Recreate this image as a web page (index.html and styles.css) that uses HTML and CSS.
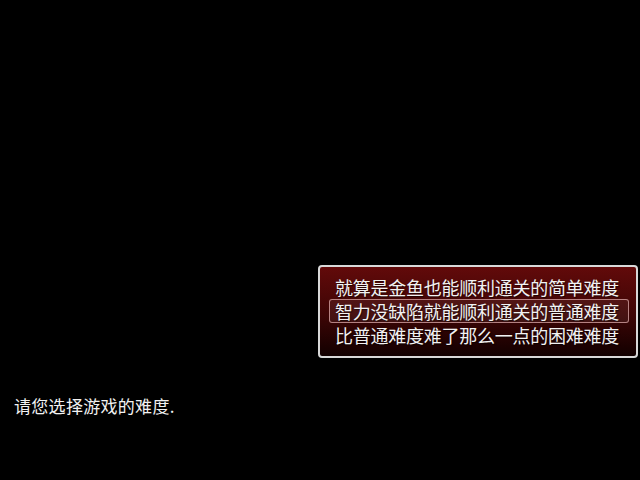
FILE: index.html
```html
<!DOCTYPE html>
<html lang="zh-CN">
<head>
<meta charset="utf-8">
<link rel="stylesheet" href="styles.css">
</head>
<body>
<div class="screen">
  <div class="choice-window">
    <div class="choice">就算是金鱼也能顺利通关的简单难度</div>
    <div class="choice selected">智力没缺陷就能顺利通关的普通难度</div>
    <div class="choice">比普通难度难了那么一点的困难难度</div>
  </div>
  <div class="message">请您选择游戏的难度.</div>
</div>
</body>
</html>
```
FILE: styles.css
```css
html, body {
  margin: 0;
  padding: 0;
  background: #000;
}
.screen {
  width: 640px;
  height: 480px;
  display: flex;
  flex-direction: column;
  background: #000;
  font-family: "Noto Sans CJK SC", "Noto Sans", sans-serif;
  color: #f2f2f2;
}
.choice-window {
  align-self: flex-end;
  margin-top: 265px;
  margin-right: 2px;
  width: 320px;
  height: 93px;
  box-sizing: border-box;
  border: 2px solid #d8d8d8;
  border-radius: 4px;
  background: linear-gradient(to bottom, #620a0a 0%, #3c0505 55%, #120000 100%);
  padding: 8px 8px 0 9px;
  display: flex;
  flex-direction: column;
}
.choice {
  height: 24px;
  line-height: 22px;
  box-sizing: border-box;
  padding-left: 5px;
  font-size: 18px;
  letter-spacing: -0.25px;
  white-space: nowrap;
  border: 1px solid transparent;
  border-radius: 3px;
  text-shadow: 1px 1px 1px rgba(0,0,0,0.6);
}
.choice.selected {
  width: 300px;
  border-color: rgba(220, 170, 170, 0.75);
  background: rgba(255, 255, 255, 0.06);
}
.message {
  margin-top: 36px;
  padding-left: 14px;
  font-size: 17px;
  line-height: 24px;
  letter-spacing: 0.3px;
  text-shadow: 1px 1px 1px rgba(0,0,0,0.6);
}
```
